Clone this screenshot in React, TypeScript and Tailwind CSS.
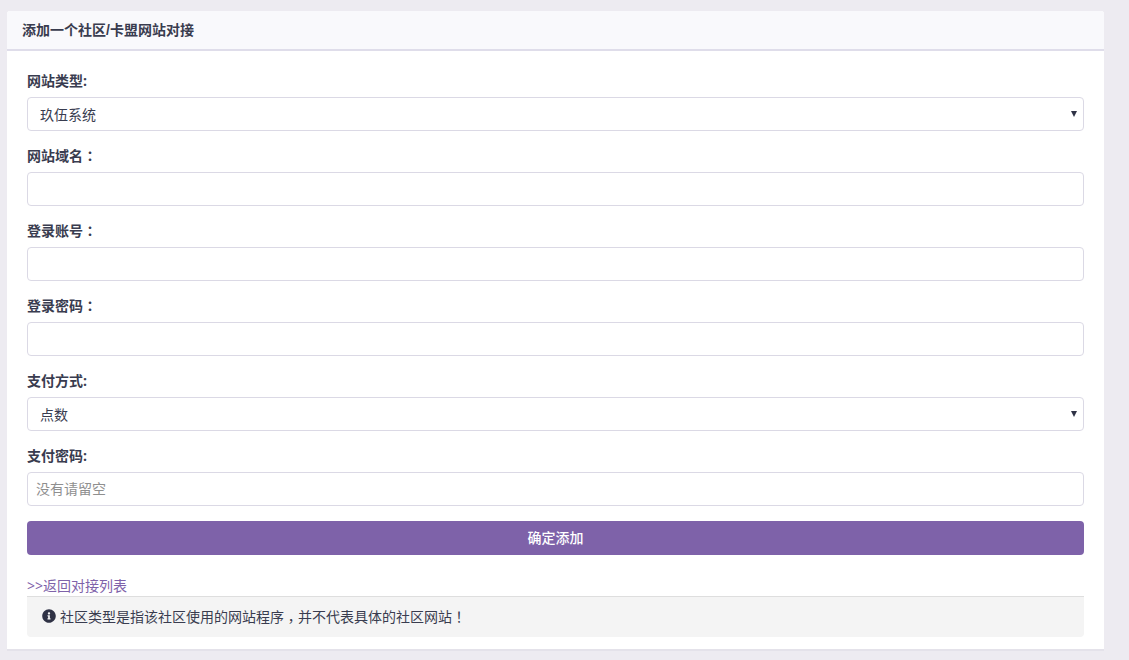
import React from "react";
import { FaInfoCircle } from "react-icons/fa";

const font = "font-['Open_Sans','Noto_Sans_CJK_SC',sans-serif]";

function Punct({ children }: { children: React.ReactNode }) {
  return <span className="font-['Noto_Sans_CJK_TC',sans-serif]">{children}</span>;
}

function Label({ children }: { children: React.ReactNode }) {
  return <label className="block mb-[5px] h-[21px] text-sm leading-[19px] font-bold text-[#393c4f]">{children}</label>;
}

function Field({ label, placeholder }: { label: React.ReactNode; placeholder?: string }) {
  return (
    <div className="mb-[15px]">
      <Label>{label}</Label>
      <input
        placeholder={placeholder}
        className="block w-full h-[34px] pl-2 pr-2 pb-[2px] text-sm bg-white border border-[#dbd9e5] rounded-[4px] outline-none text-[#393c4f] placeholder:text-[#8f8f8f]"
      />
    </div>
  );
}

function SelectField({ label, value }: { label: React.ReactNode; value: string }) {
  return (
    <div className="mb-[15px]">
      <Label>{label}</Label>
      <div className="flex items-center justify-between w-full h-[34px] pl-3 pr-[6px] text-sm bg-white border border-[#dbd9e5] rounded-[4px] text-[#393c4f]">
        <span className="pt-[2px]">{value}</span>
        <svg viewBox="0 0 6 6" className="w-[6px] h-[6px] text-[#2f3245]" fill="currentColor">
          <polygon points="0,0 6,0 3,6" />
        </svg>
      </div>
    </div>
  );
}

export default function App() {
  return (
    <div className={`${font} min-h-[660px] bg-[#edebf1] pt-[11px] pl-[7px] pr-[25px] pb-[9px]`}>
      <div className="bg-white border-b-2 border-[#e4e2ea] rounded-t-[3px]">
        <div className="h-10 px-[15px] bg-[#f9f9fc] border-b-2 border-[#dfddea] text-sm leading-[38px] font-bold text-[#393c4f] rounded-t-[3px]">
          添加一个社区<span className="font-['Liberation_Sans',sans-serif]">/</span>卡盟网站对接
        </div>
        <div className="px-5 pt-5 pb-3">
          <SelectField label="网站类型:" value="玖伍系统" />
          <Field label={<>网站域名<Punct>：</Punct></>} />
          <Field label={<>登录账号<Punct>：</Punct></>} />
          <Field label={<>登录密码<Punct>：</Punct></>} />
          <SelectField label="支付方式:" value="点数" />
          <Field label="支付密码:" placeholder="没有请留空" />
          <button className="block w-full h-[34px] bg-[#7e62a9] text-white text-sm font-medium rounded-[4px]">确定添加</button>
          <a className="block mt-[21px] h-5 text-sm leading-5 text-[#7e62a9]">&gt;&gt;返回对接列表</a>
          <div className="flex items-center gap-1 h-[41px] pl-[15px] bg-[#f4f4f4] border-t border-[#dedede] rounded-b-[4px] text-sm text-[#393c4f]">
            <FaInfoCircle className="w-[14px] h-[14px] -mt-[2px] text-[#2f3245]" />
            <span className="pb-[2px]">社区类型是指该社区使用的网站程序<span className="inline-block translate-y-[4px] font-['Noto_Sans_CJK_TC',sans-serif]">，</span>并不代表具体的社区网站<Punct>！</Punct></span>
          </div>
        </div>
      </div>
    </div>
  );
}
